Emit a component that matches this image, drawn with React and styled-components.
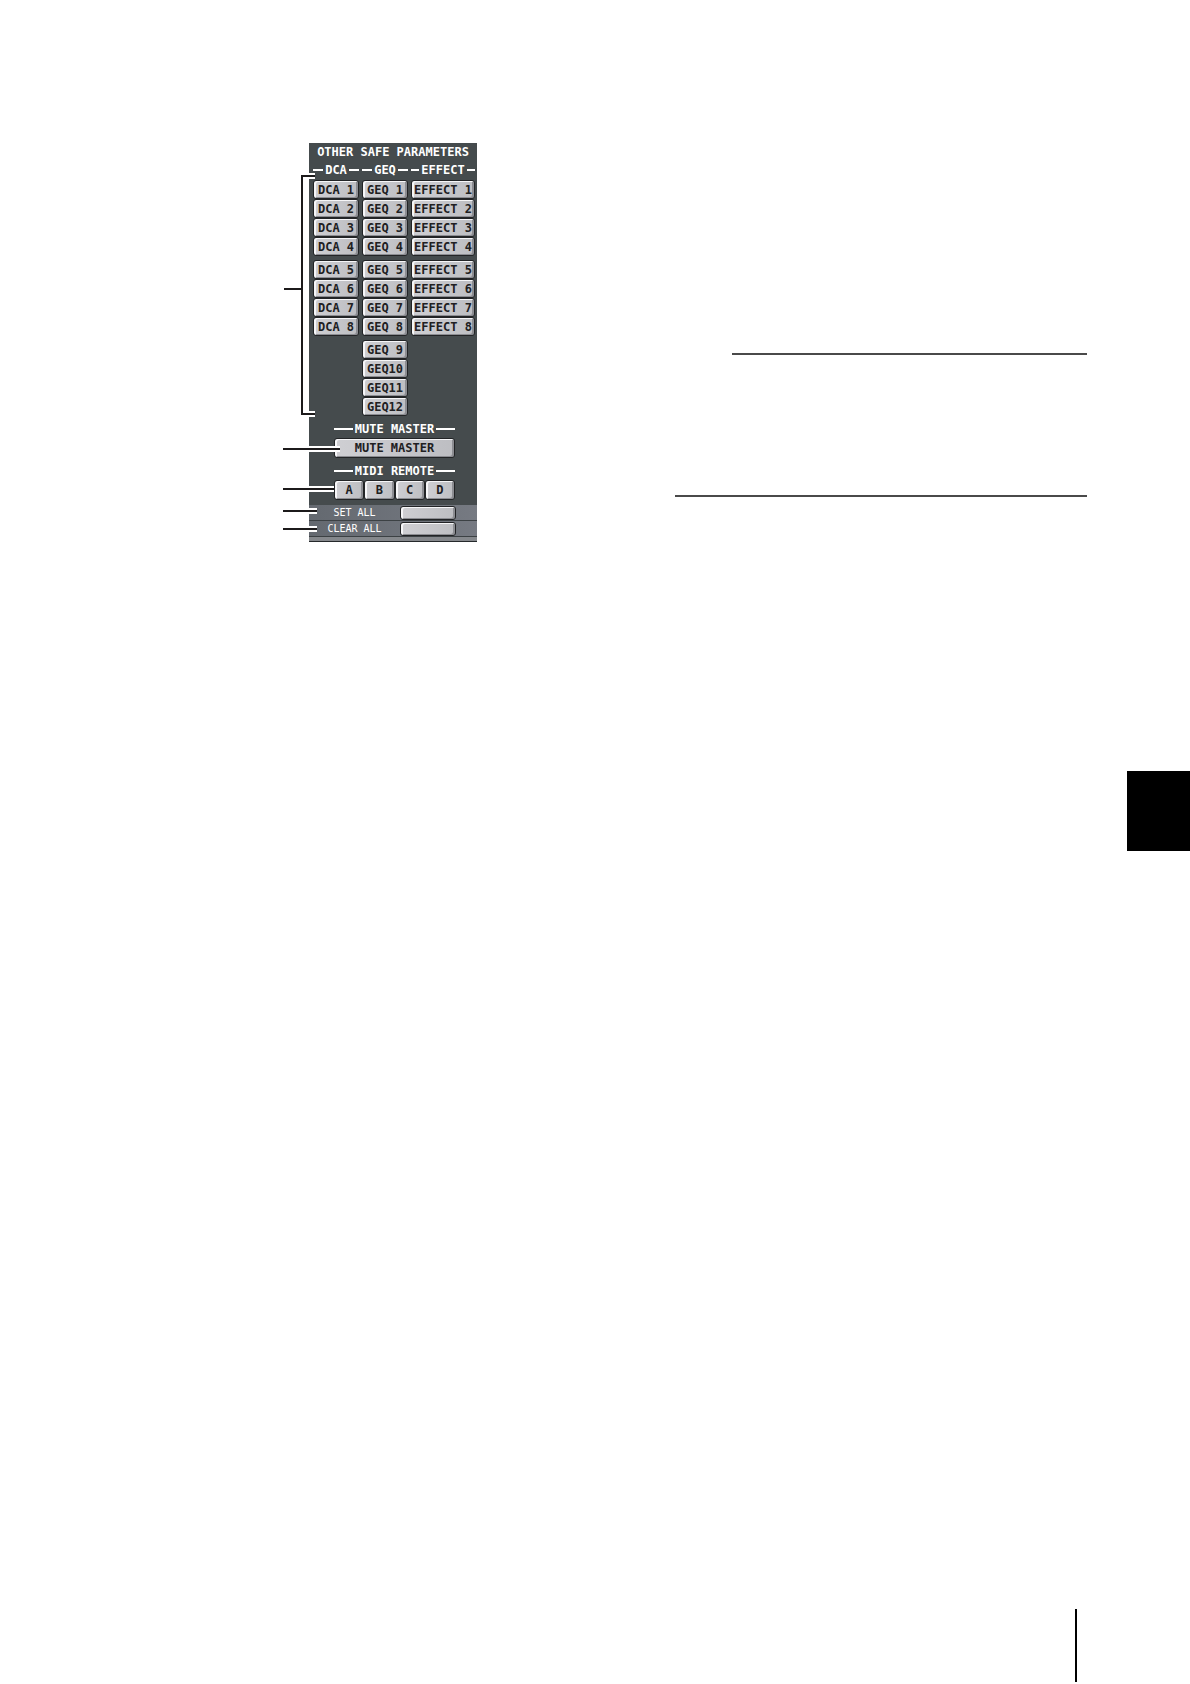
import React from "react";
import styled, { createGlobalStyle } from "styled-components";

const GlobalStyle = createGlobalStyle`
  * {
    box-sizing: border-box;
  }
  body {
    margin: 0;
    background: #fff;
  }
`;

const Page = styled.div`
  min-height: 100vh;
  display: flex;
  flex-direction: column;
`;

const Body = styled.main`
  flex: 1;
  display: grid;
  grid-template-columns: 675fr 412fr 103fr;
  align-items: start;
`;

const Figure = styled.figure`
  position: relative;
  width: 194px;
  margin: 143px 0 0 283px;
  padding-left: 26px;
`;

const Callouts = styled.svg`
  position: absolute;
  top: 0;
  left: 0;
  pointer-events: none;
`;

const Notes = styled.section`
  display: flex;
  flex-direction: column;
  gap: 140px;
  padding-top: 353px;
`;

const Rule = styled.hr`
  align-self: stretch;
  height: 2px;
  margin: 0 0 0 ${(props) => props.$indent || 0}px;
  border: 0;
  background: #4a4a4a;
`;

const ChapterTab = styled.div`
  justify-self: end;
  width: 63px;
  height: 80px;
  margin-top: 771px;
  background: #000;
`;

const Footer = styled.footer`
  display: flex;
  justify-content: flex-end;
  padding: 0 113px 2px 0;
`;

const FooterBar = styled.div`
  width: 2px;
  height: 73px;
  background: #000;
`;

const Panel = styled.div`
  background: #454b4d;
  color: #fff;
  font: bold 12px/18px "DejaVu Sans Mono", monospace;
  border-bottom: 1px solid #25292b;
`;

const Title = styled.h2`
  margin: 0;
  font: inherit;
  text-align: center;
  white-space: nowrap;
`;

const Columns = styled.div`
  display: grid;
  grid-template-columns: 46px 46px 1fr;
  gap: 3px;
  padding: 0 2px 0 4px;
`;

const Column = styled.div`
  display: flex;
  flex-direction: column;
`;

const Heading = styled.h3`
  display: flex;
  align-items: center;
  gap: 2px;
  margin: 0;
  font: inherit;
  white-space: nowrap;

  &::before,
  &::after {
    content: "";
    flex: 1;
    height: 2px;
    background: #fff;
  }
`;

const Bank = styled.div`
  display: flex;
  flex-direction: column;
  margin-top: ${(props) => (props.$first ? 1 : 4)}px;
`;

const Key = styled.button`
  height: ${(props) => props.$height || 19}px;
  flex: ${(props) => (props.$grow ? 1 : "none")};
  padding: 0;
  border: 1px solid #222426;
  border-radius: 3px;
  background: linear-gradient(90deg, #cfcfd3, #bdbec2);
  box-shadow: inset 2px 1px 0 #f6f6f8, inset -2px -1px 0 #8c8d92;
  color: #202022;
  font: inherit;
  line-height: 16px;
  text-align: center;
  white-space: nowrap;
`;

const Section = styled.div`
  display: flex;
  flex-direction: column;
  width: 121px;
  margin: ${(props) => props.$space}px auto 0 25px;
`;

const KeyRow = styled.div`
  display: flex;
`;

const Actions = styled.div`
  margin-top: 5px;
  padding-bottom: 4px;
  background: #85888c;
`;

const Action = styled.div`
  display: flex;
  align-items: center;
  justify-content: space-between;
  height: 16px;
  padding-right: 21px;
  border-bottom: 1px solid #3c4144;
  background: linear-gradient(90deg, #646970, #767a82);
  font: 10px/14px "DejaVu Sans Mono", monospace;

  label {
    flex: 1;
    text-align: center;
  }

  button {
    width: 56px;
  }
`;

const columns = [
  { name: "DCA", banks: [[1, 2, 3, 4], [5, 6, 7, 8]] },
  { name: "GEQ", banks: [[1, 2, 3, 4], [5, 6, 7, 8], [9, 10, 11, 12]] },
  { name: "EFFECT", banks: [[1, 2, 3, 4], [5, 6, 7, 8]] },
];

// x2 is where each pointer ends, y its top edge; edge is the panel's left side
const edge = 26;
const pointers = [
  { x1: 18, x2: 32, y: 32 },
  { x1: 18, x2: 32, y: 270 },
  { x1: 0, x2: 57, y: 305 },
  { x1: 0, x2: 51, y: 345 },
  { x1: 0, x2: 34, y: 367 },
  { x1: 0, x2: 34, y: 385 },
];

const Pointers = () => (
  <Callouts width="194" height="399" viewBox="0 0 194 399" aria-hidden="true">
    {pointers.map((p) => (
      <g key={p.y}>
        <rect x={edge} y={p.y - 2} width={p.x2 - edge} height="6" fill="#fff" />
        <rect x={p.x1} y={p.y} width={p.x2 - p.x1} height="2" fill="#1c1a1b" />
      </g>
    ))}
    <rect x="18" y="32" width="2" height="240" fill="#1c1a1b" />
    <rect x="1" y="145" width="18" height="2" fill="#1c1a1b" />
  </Callouts>
);

const SafePanel = () => (
  <Panel>
    <Title>OTHER SAFE PARAMETERS</Title>
    <Columns>
      {columns.map(({ name, banks }) => (
        <Column key={name}>
          <Heading>{name}</Heading>
          {banks.map((bank, i) => (
            <Bank key={i} $first={i === 0}>
              {bank.map((n) => (
                <Key key={n} type="button">
                  {n < 10 ? `${name} ${n}` : `${name}${n}`}
                </Key>
              ))}
            </Bank>
          ))}
        </Column>
      ))}
    </Columns>
    <Section $space={4}>
      <Heading>MUTE MASTER</Heading>
      <Key type="button" $height={20}>MUTE MASTER</Key>
    </Section>
    <Section $space={4}>
      <Heading>MIDI REMOTE</Heading>
      <KeyRow>
        {["A", "B", "C", "D"].map((letter) => (
          <Key key={letter} type="button" $height={20} $grow>
            {letter}
          </Key>
        ))}
      </KeyRow>
    </Section>
    <Actions>
      <Action>
        <label htmlFor="set-all">SET ALL</label>
        <Key id="set-all" type="button" $height={14} />
      </Action>
      <Action>
        <label htmlFor="clear-all">CLEAR ALL</label>
        <Key id="clear-all" type="button" $height={14} />
      </Action>
    </Actions>
  </Panel>
);

const App = () => (
  <>
    <GlobalStyle />
    <Page>
      <Body>
        <Figure>
          <SafePanel />
          <Pointers />
        </Figure>
        <Notes>
          <Rule $indent={57} />
          <Rule />
        </Notes>
        <ChapterTab />
      </Body>
      <Footer>
        <FooterBar />
      </Footer>
    </Page>
  </>
);

export default App;
